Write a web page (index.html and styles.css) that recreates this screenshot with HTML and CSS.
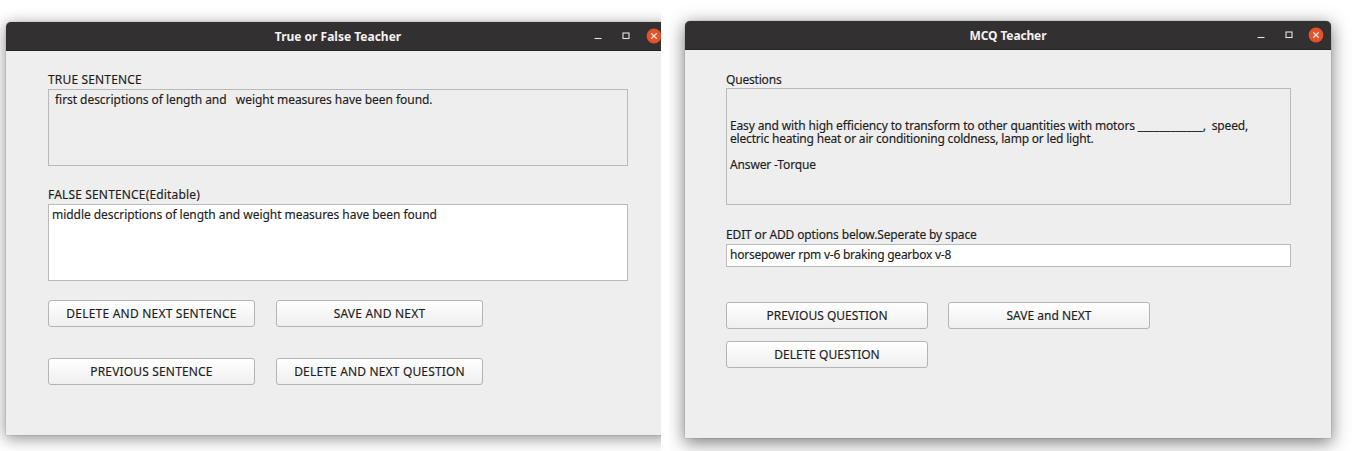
FILE: index.html
```html
<!DOCTYPE html>
<html lang="en">
<head>
<meta charset="utf-8">
<title>Teacher tools</title>
<link rel="stylesheet" href="styles.css">
</head>
<body>
<main class="gallery">
  <section class="shot shot-tf">
    <div class="window window-tf">
      <header class="titlebar">
        <h1 class="title"><span class="t">True or False Teacher</span></h1>
        <div class="controls">
          <svg class="ctl" viewBox="0 0 16 16"><path d="M4.5 10.5h7" stroke="#e4e2e0" stroke-width="1.1"/></svg>
          <svg class="ctl" viewBox="0 0 16 16"><rect x="5" y="5" width="6" height="5.5" fill="none" stroke="#e4e2e0" stroke-width="1.1"/></svg>
          <svg class="ctl" viewBox="0 0 16 16"><circle cx="8" cy="8" r="7.4" fill="#e45328"/><path d="M5.2 5.2l5.6 5.6M10.8 5.2l-5.6 5.6" stroke="#fbe3da" stroke-width="1.3"/></svg>
        </div>
      </header>
      <div class="body body-tf">
        <label class="label"><span class="t wide">TRUE SENTENCE</span></label>
        <div class="box area indent"><span class="t snug">first descriptions of length and &nbsp; weight measures have been found.</span></div>
        <label class="label label-false"><span class="t wide">FALSE SENTENCE(Editable)</span></label>
        <div class="box area white"><span class="t snug">middle descriptions of length and weight measures have been found</span></div>
        <div class="buttons buttons-tf">
          <button class="btn"><span class="t wider">DELETE AND NEXT SENTENCE</span></button>
          <button class="btn"><span class="t wider">SAVE AND NEXT</span></button>
          <button class="btn"><span class="t wide">PREVIOUS SENTENCE</span></button>
          <button class="btn"><span class="t wide">DELETE AND NEXT QUESTION</span></button>
        </div>
      </div>
    </div>
  </section>
  <section class="shot shot-mcq">
    <div class="window window-mcq">
      <header class="titlebar">
        <h1 class="title"><span class="t tight">MCQ Teacher</span></h1>
        <div class="controls">
          <svg class="ctl" viewBox="0 0 16 16"><path d="M4.5 10.5h7" stroke="#e4e2e0" stroke-width="1.1"/></svg>
          <svg class="ctl" viewBox="0 0 16 16"><rect x="5" y="5" width="6" height="5.5" fill="none" stroke="#e4e2e0" stroke-width="1.1"/></svg>
          <svg class="ctl" viewBox="0 0 16 16"><circle cx="8" cy="8" r="7.4" fill="#e45328"/><path d="M5.2 5.2l5.6 5.6M10.8 5.2l-5.6 5.6" stroke="#fbe3da" stroke-width="1.3"/></svg>
        </div>
      </header>
      <div class="body body-mcq">
        <label class="label"><span class="t tighter">Questions</span></label>
        <div class="box question">
          <p class="line"><span class="t tight">Easy and with high efficiency to transform to other quantities with motors <span class="blank">____________</span>,&nbsp; speed,</span></p>
          <p class="line"><span class="t tighter">electric heating heat or air conditioning coldness, lamp or led light.</span></p>
          <p class="line answer"><span class="t tight">Answer -Torque</span></p>
        </div>
        <label class="label label-edit"><span class="t tight">EDIT or ADD options below.Seperate by space</span></label>
        <div class="box input white"><span class="t tightest">horsepower rpm v-6 braking gearbox v-8</span></div>
        <div class="buttons buttons-mcq">
          <button class="btn"><span class="t">PREVIOUS QUESTION</span></button>
          <button class="btn"><span class="t">SAVE and NEXT</span></button>
          <button class="btn"><span class="t">DELETE QUESTION</span></button>
        </div>
      </div>
    </div>
  </section>
</main>
</body>
</html>
```
FILE: styles.css
```css
* { box-sizing: border-box; }
body { margin: 0; background: #fff; font: 12px/13px "Noto Sans", "Open Sans", sans-serif; color: #1d1d1d; overflow: hidden; }
.gallery { display: flex; gap: 8px; width: 1362px; height: 451px; }
.shot { height: 451px; overflow: hidden; }
.shot-tf { width: 661px; padding: 22px 0 0 6px; }
.shot-mcq { width: 688px; padding: 21px 0 0 16px; }
.window { border-radius: 5px 5px 0 0; background: #eee; }
.window-tf { width: 664px; height: 413px; box-shadow: 0 0 1px 0 rgba(0,0,0,.6), 0 3px 15px 1px rgba(0,0,0,.42); }
.window-mcq { width: 646px; height: 417px; box-shadow: 0 0 1px 0 rgba(0,0,0,.6), 0 4px 17px 1px rgba(0,0,0,.5); }
.titlebar { display: grid; grid-template-columns: 1fr; align-items: center; height: 29px; background: #333031; border-radius: 5px 5px 0 0; border-bottom: 1px solid #252323; }
.title, .controls { grid-area: 1 / 1; }
.title { margin: 0; padding-top: 1px; text-align: center; color: #f3f2f1; font-size: 12px; line-height: 16px; font-weight: 700; }
.controls { display: flex; justify-content: flex-end; gap: 12px; padding-right: 8px; }
.window-mcq .controls { padding-right: 7px; gap: 11.5px; }
.ctl { width: 16px; height: 16px; }
.t { display: inline-block; white-space: nowrap; }
.body .t { -webkit-text-stroke: .15px currentColor; }
.wider { letter-spacing: .21px; }
.wide { letter-spacing: .16px; }
.snug { letter-spacing: -.045px; }
.tight { letter-spacing: -.145px; }
.tighter { letter-spacing: -.19px; }
.tightest { letter-spacing: -.24px; }
.blank { letter-spacing: .08px; }
.body { display: flex; flex-direction: column; }
.body-tf { padding: 20px 43px 0 42px; }
.body-mcq { padding: 21px 40px 0 41px; }
.label { height: 18px; line-height: 18px; }
.body-mcq .label { height: 17px; line-height: 17px; }
.label-false { margin-top: 21px; line-height: 16px; height: 17px; }
.body-mcq .label-edit { margin-top: 22px; line-height: 16px; }
.box { border: 1px solid #b9b9b9; }
.white { background: #fff; }
.area { width: 580px; height: 77px; padding: 3px; }
.indent { padding-left: 6px; }
.question { height: 117px; padding: 30px 3px 0; }
.line { margin: 0; }
.answer { margin-top: 13px; }
.input { height: 23px; padding: 3px; }
.buttons { display: grid; }
.buttons-tf { grid-template-columns: 207px 207px; column-gap: 21px; row-gap: 31px; margin-top: 19px; }
.buttons-mcq { grid-template-columns: 202px 202px; column-gap: 20px; row-gap: 12px; margin-top: 35px; }
.btn { height: 27px; padding: 0; border: 1px solid #b4b4b4; border-radius: 3px; background: linear-gradient(#fff, #efefef); font: inherit; color: inherit; }
```
